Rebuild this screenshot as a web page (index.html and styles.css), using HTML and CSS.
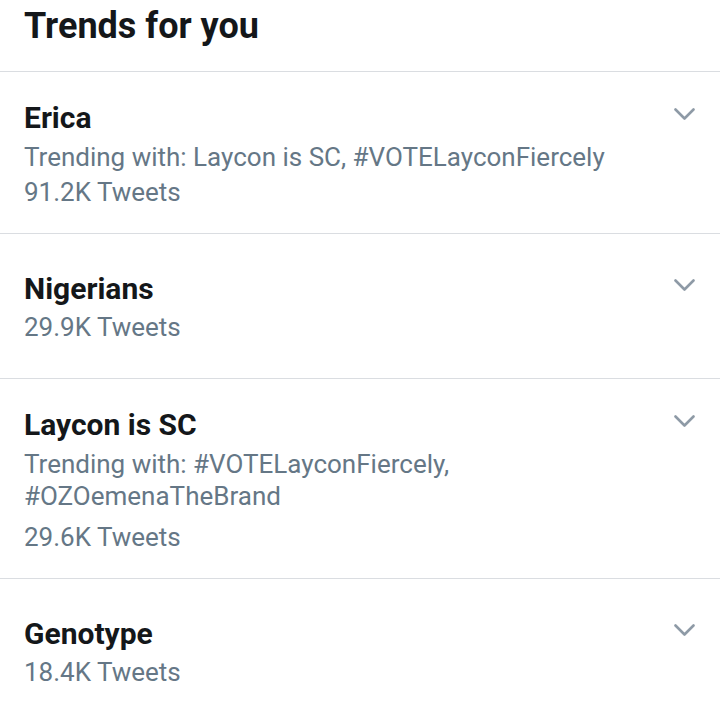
FILE: index.html
```html
<!DOCTYPE html>
<html lang="en">
<head>
<meta charset="utf-8">
<title>Trends for you</title>
<link rel="stylesheet" href="styles.css">
</head>
<body>
<main class="panel">
  <header class="panel-header">
    <h1 class="panel-title">Trends for you</h1>
  </header>
  <ul class="trend-list">
    <li class="trend trend--context">
      <div class="trend-body">
        <div class="trend-name">Erica</div>
        <div class="trend-with">Trending with: Laycon is SC, #VOTELayconFiercely</div>
        <div class="trend-count">91.2K Tweets</div>
      </div>
      <svg class="chevron" width="21" height="12" viewBox="0 0 21 12" aria-hidden="true"><polyline points="1.5,1.5 10.5,10.5 19.5,1.5"/></svg>
    </li>
    <li class="trend">
      <div class="trend-body">
        <div class="trend-name">Nigerians</div>
        <div class="trend-count">29.9K Tweets</div>
      </div>
      <svg class="chevron" width="21" height="12" viewBox="0 0 21 12" aria-hidden="true"><polyline points="1.5,1.5 10.5,10.5 19.5,1.5"/></svg>
    </li>
    <li class="trend trend--context">
      <div class="trend-body">
        <div class="trend-name">Laycon is SC</div>
        <div class="trend-with trend-with--wrap">Trending with: #VOTELayconFiercely,<br>#OZOemenaTheBrand</div>
        <div class="trend-count trend-count--after-wrap">29.6K Tweets</div>
      </div>
      <svg class="chevron" width="21" height="12" viewBox="0 0 21 12" aria-hidden="true"><polyline points="1.5,1.5 10.5,10.5 19.5,1.5"/></svg>
    </li>
    <li class="trend trend--last">
      <div class="trend-body">
        <div class="trend-name">Genotype</div>
        <div class="trend-count">18.4K Tweets</div>
      </div>
      <svg class="chevron" width="21" height="12" viewBox="0 0 21 12" aria-hidden="true"><polyline points="1.5,1.5 10.5,10.5 19.5,1.5"/></svg>
    </li>
  </ul>
</main>
</body>
</html>
```

FILE: styles.css
```css
html, body {
  margin: 0;
  padding: 0;
  background: #ffffff;
}

body {
  font-family: Roboto, "Noto Sans", "Liberation Sans", sans-serif;
  color: #14171a;
  width: 720px;
  height: 716px;
  overflow: hidden;
}

.panel-header {
  height: 72px;
  box-sizing: border-box;
  padding: 5px 24px 0;
  border-bottom: 1px solid #dadde1;
}

.panel-title {
  margin: 0;
  font-size: 36px;
  line-height: 42px;
  font-weight: 700;
  color: #14171a;
}

.trend-list {
  list-style: none;
  margin: 0;
  padding: 0;
}

.trend {
  display: flex;
  justify-content: space-between;
  align-items: flex-start;
  padding: 36px 25px 33px 24px;
  border-bottom: 1px solid #dadde1;
}

.trend--context {
  padding-top: 27px;
  padding-bottom: 23px;
}

.trend--last {
  border-bottom: none;
}

.trend-name {
  font-size: 30px;
  line-height: 38px;
  font-weight: 700;
  color: #14171a;
}

.trend-with {
  margin-top: 4px;
  font-size: 26px;
  line-height: 32px;
  color: #657786;
}

.trend-count {
  margin-top: 2px;
  font-size: 26px;
  line-height: 35px;
  color: #657786;
}

.trend-count--after-wrap {
  margin-top: 8px;
}

.chevron {
  flex: none;
  margin-top: 9px;
  fill: none;
  stroke: #8e9aa6;
  stroke-width: 2.6;
  stroke-linecap: round;
  stroke-linejoin: round;
}
```
